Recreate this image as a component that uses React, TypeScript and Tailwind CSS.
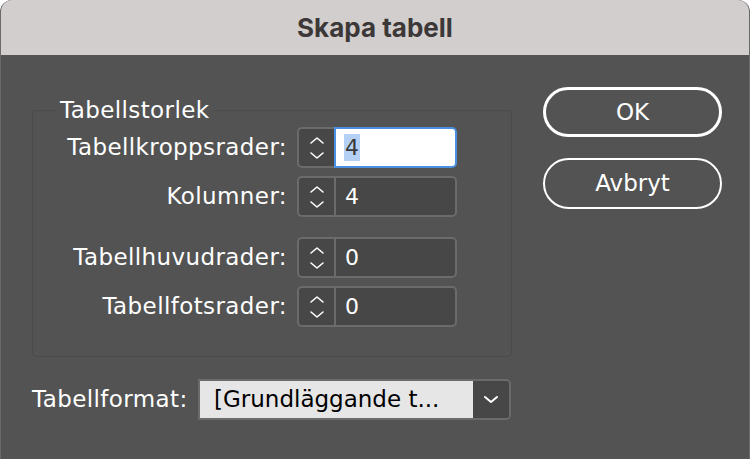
import React from 'react'

const font = { fontFamily: '"DejaVu Sans", "Liberation Sans", sans-serif' }

function Stepper() {
  return (
    <svg width="20" height="30" viewBox="0 0 20 30" fill="none" stroke="white" strokeWidth="1.6" strokeLinecap="round" strokeLinejoin="round">
      <path d="M4 10 L10 5 L16 10" />
      <path d="M4 20 L10 25 L16 20" />
    </svg>
  )
}

interface SpinFieldProps {
  value: string
  active?: boolean
}

function SpinField({ value, active = false }: SpinFieldProps) {
  return (
    <div className="flex h-[41px] w-[160px]">
      <div className="flex w-[37px] items-center justify-center rounded-l-[5px] border-2 border-r-0 border-[#6b6b6b] bg-[#474747]">
        <Stepper />
      </div>
      {active ? (
        <div className="flex flex-1 items-center rounded-r-[5px] border-2 border-[#4a8fe0] bg-white pl-[8px]">
          <span className="bg-[#b4d1f5] px-[1px] text-[22px] leading-[27px] text-[#3a3a3a]">{value}</span>
        </div>
      ) : (
        <div className="flex flex-1 items-center rounded-r-[5px] border-2 border-[#6b6b6b] bg-[#474747] pl-[9px]">
          <span className="text-[22px] text-white">{value}</span>
        </div>
      )}
    </div>
  )
}

function Row({ label, value, active }: { label: string; value: string; active?: boolean }) {
  return (
    <div className="flex items-center">
      <div className="w-[264px] pr-[10px] text-right text-[23px] tracking-[0.4px] text-white">{label}</div>
      <SpinField value={value} active={active} />
    </div>
  )
}

export default function App() {
  return (
    <div className="h-[459px] w-[750px] overflow-hidden bg-white" style={font}>
      <div className="flex h-full flex-col overflow-hidden rounded-t-[12px] border-x border-[#6a6a6a] bg-[#535353]">
        {/* Title bar */}
        <div
          className="flex h-[55px] shrink-0 items-center justify-center bg-[#d3cece] text-[26px] font-bold text-[#3c3838]"
          style={{ fontFamily: 'Inter, "Liberation Sans", sans-serif' }}
        >
          Skapa tabell
        </div>

        <div className="flex flex-1 pl-[31px] pt-[45px]">
          {/* Left column */}
          <div className="flex w-[480px] flex-col">
            <fieldset className="h-[257px] rounded-[4px] border border-[#4a4a4a]">
              <legend className="ml-[22px] px-[5px] text-[23px] leading-[20px] tracking-[0.4px] text-white">Tabellstorlek</legend>
              <div className="flex flex-col pt-[7px]">
                <Row label="Tabellkroppsrader:" value="4" active />
                <div className="h-[8px]" />
                <Row label="Kolumner:" value="4" />
                <div className="h-[20px]" />
                <Row label="Tabellhuvudrader:" value="0" />
                <div className="h-[8px]" />
                <Row label="Tabellfotsrader:" value="0" />
              </div>
            </fieldset>

            <div className="mt-[22px] flex items-center">
              <div className="w-[166px] text-[23px] tracking-[0.4px] text-white">Tabellformat:</div>
              <div className="flex h-[41px] w-[313px] overflow-hidden rounded-r-[5px] border-2 border-[#6b6b6b]">
                <div className="flex flex-1 items-center bg-[#e6e6e6] pl-[14px] text-[23px] text-black">
                  [Grundläggande t...
                </div>
                <div className="flex w-[36px] items-center justify-center bg-[#474747]">
                  <svg width="16" height="10" viewBox="0 0 16 10" fill="none" stroke="white" strokeWidth="2" strokeLinecap="round" strokeLinejoin="round">
                    <path d="M2 2 L8 7 L14 2" />
                  </svg>
                </div>
              </div>
            </div>
          </div>

          {/* Buttons */}
          <div className="ml-[31px] flex flex-col">
            <button className="-mt-[13px] flex h-[50px] w-[179px] items-center justify-center rounded-full border-[3px] border-white text-[23px] text-white">
              OK
            </button>
            <button className="mt-[21px] flex h-[51px] w-[179px] items-center justify-center rounded-full border-2 border-white text-[23px] text-white">
              Avbryt
            </button>
          </div>
        </div>
      </div>
    </div>
  )
}
